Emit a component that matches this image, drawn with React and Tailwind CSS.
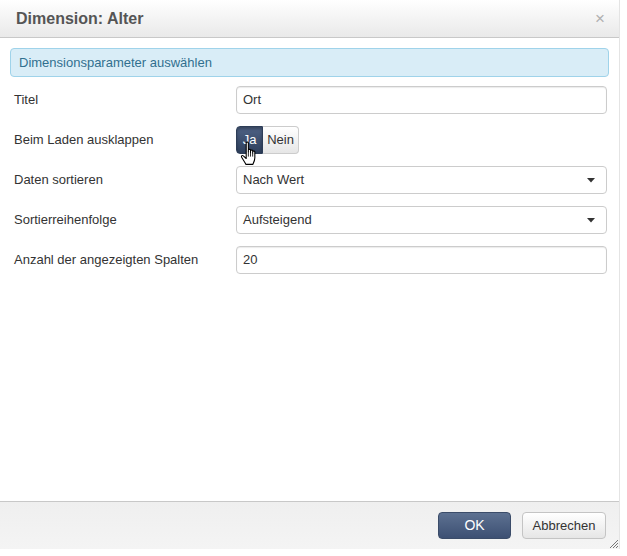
import React from "react";

function Caret() {
  return (
    <svg width="8" height="5" viewBox="0 0 8 5" className="shrink-0">
      <path d="M0 0 H8 L4 4.5 Z" fill="#333" />
    </svg>
  );
}

function HandCursor() {
  return (
    <svg width="16" height="24" viewBox="0 0 13 20" className="absolute left-[4px] top-[15px]">
      <path
        d="M5 1.5 C5 0.7 6.8 0.7 6.8 1.5 L6.8 9 L6.8 7.5 C6.8 6.7 8.6 6.7 8.6 7.5 L8.6 9.5 L8.6 8.2 C8.6 7.4 10.4 7.4 10.4 8.2 L10.4 10 L10.4 9 C10.4 8.2 12.2 8.2 12.2 9 L12.2 14 C12.2 16.5 11 18.5 10.5 19.5 L4.8 19.5 C4 18 2 15 1.2 13.5 C0.6 12.4 1.8 11.6 2.6 12.4 L5 14.6 Z"
        fill="#fff"
        stroke="#000"
        strokeWidth="0.9"
        strokeLinejoin="round"
      />
      <path d="M6.8 9 V13 M8.6 9.5 V13 M10.4 10 V13" stroke="#000" strokeWidth="0.7" />
    </svg>
  );
}

function Row({ label, children }) {
  return (
    <div className="flex h-[28px] items-center">
      <div className="w-[226px] shrink-0 pl-[4px] text-[13px] text-[#333]">{label}</div>
      <div className="flex-1">{children}</div>
    </div>
  );
}

function TextInput({ value }) {
  return (
    <div className="flex h-[28px] w-[371px] items-center rounded-[4px] border border-[#ccc] bg-white px-[6px] text-[13px] text-[#333] shadow-[inset_0_1px_1px_rgba(0,0,0,0.08)]">
      {value}
    </div>
  );
}

function Select({ value }) {
  return (
    <div className="flex h-[28px] w-[371px] items-center justify-between rounded-[4px] border border-[#ccc] bg-white pl-[6px] pr-[11px] text-[13px] text-[#333]">
      <span>{value}</span>
      <Caret />
    </div>
  );
}

export default function App() {
  return (
    <div
      className="relative h-[556px] w-[627px] bg-white"
      style={{ fontFamily: '"Liberation Sans", Arial, sans-serif' }}
    >
      <div className="flex h-[549px] w-[620px] flex-col border-r border-[#e4e4e4] bg-white">
        {/* Header */}
        <div className="flex h-[38px] shrink-0 items-center justify-between border-b border-[#c8c8c8] bg-gradient-to-b from-white to-[#e9e9e9] pl-[16px] pr-[14px]">
          <span className="text-[16px] font-bold text-[#555]">Dimension: Alter</span>
          <span className="text-[17px] leading-none text-[#b0b0b0]">×</span>
        </div>

        {/* Body */}
        <div className="flex flex-1 flex-col px-[10px] pt-[10px]">
          <div className="flex h-[29px] items-center rounded-[4px] border border-[#9fd3ea] bg-[#d9edf7] px-[8px] text-[13px] text-[#31708f]">
            Dimensionsparameter auswählen
          </div>

          <div className="mt-[9px] flex flex-col gap-[12px]">
            <Row label="Titel">
              <TextInput value="Ort" />
            </Row>
            <Row label="Beim Laden ausklappen">
              <div className="relative flex h-[28px] w-fit">
                <div className="flex h-full w-[27px] items-center justify-center rounded-l-[4px] border border-[#2d3d57] bg-gradient-to-b from-[#4f6386] to-[#2e3f5c] text-[13px] text-white shadow-[inset_0_2px_3px_rgba(0,0,0,0.3)]">
                  Ja
                </div>
                <div className="flex h-full w-[36px] items-center justify-center rounded-r-[4px] border border-l-0 border-[#ccc] bg-gradient-to-b from-white to-[#e6e6e6] text-[13px] text-[#333]">
                  Nein
                </div>
                <HandCursor />
              </div>
            </Row>
            <Row label="Daten sortieren">
              <Select value="Nach Wert" />
            </Row>
            <Row label="Sortierreihenfolge">
              <Select value="Aufsteigend" />
            </Row>
            <Row label="Anzahl der angezeigten Spalten">
              <TextInput value="20" />
            </Row>
          </div>
        </div>

        {/* Footer */}
        <div className="relative flex h-[48px] shrink-0 items-start justify-end gap-[11px] border-t border-[#c8c8c8] bg-gradient-to-b from-[#efefef] to-[#f4f4f4] pr-[13px] pt-[10px]">
          <button className="flex h-[27px] w-[73px] items-center justify-center rounded-[4px] border border-[#3b4c69] bg-gradient-to-b from-[#5d7191] to-[#3d5073] text-[14px] text-white">
            OK
          </button>
          <button className="flex h-[27px] w-[84px] items-center justify-center rounded-[4px] border border-[#c4c4c4] bg-gradient-to-b from-white to-[#e6e6e6] text-[13px] text-[#333]">
            Abbrechen
          </button>
          <svg width="8" height="8" viewBox="0 0 8 8" className="absolute bottom-[1px] right-[1px]">
            <path d="M8 0 L0 8 M8 3 L3 8 M8 6 L6 8" stroke="#777" strokeWidth="1" />
          </svg>
        </div>
      </div>
    </div>
  );
}
